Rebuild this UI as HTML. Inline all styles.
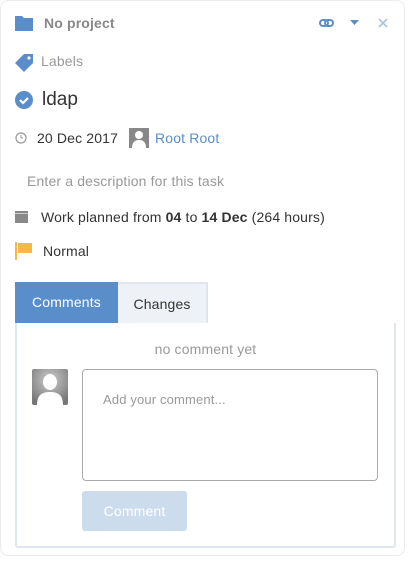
<!DOCTYPE html>
<html><head><style>
*{box-sizing:border-box;margin:0;padding:0}
body{width:409px;height:562px;background:#fff;font-family:"Liberation Sans",sans-serif;font-size:14px;color:#333;position:relative;overflow:hidden;letter-spacing:0.15px}
.card{position:absolute;left:0;top:0;width:405px;height:556px;border:1px solid #ececec;border-radius:8px;background:#fff}
.a{position:absolute;white-space:nowrap}
</style></head><body>
<div class="card"></div>
<svg class="a" style="left:15px;top:15px" width="18" height="16" viewBox="0 0 18 16"><path d="M0 1h7l2 2h9v13H0z" fill="#5a8ecb"/></svg>
<div class="a" style="left:44px;top:15px;font-weight:bold;color:#888;font-size:14px">No project</div>
<svg class="a" style="left:319px;top:18px" width="15" height="10" viewBox="0 0 15 10"><rect x="1" y="2" width="8" height="6" rx="3" fill="none" stroke="#5a8ecb" stroke-width="2"/><rect x="6" y="2" width="8" height="6" rx="3" fill="none" stroke="#5a8ecb" stroke-width="2"/></svg>
<svg class="a" style="left:350px;top:20px" width="9" height="6"><path d="M0 0h9L4.5 5z" fill="#5a8ecb"/></svg>
<svg class="a" style="left:378px;top:18px" width="10" height="10"><path d="M1 1l8 8M9 1l-8 8" stroke="#a9c2e4" stroke-width="1.6"/></svg>
<svg class="a" style="left:15px;top:53px" width="19" height="19" viewBox="0 0 19 19"><path d="M9 1h9v9l-9 9-9-9z" fill="#5a8ecb"/><circle cx="14" cy="5" r="1.6" fill="#fff"/></svg>
<div class="a" style="left:41px;top:53px;color:#999">Labels</div>
<svg class="a" style="left:15px;top:91px" width="18" height="18"><circle cx="9" cy="9" r="9" fill="#5a8ecb"/><path d="M5 9l3 3 5-5" stroke="#fff" stroke-width="2.2" fill="none"/></svg>
<div class="a" style="left:42px;top:89px;font-size:19px;color:#333;letter-spacing:0">ldap</div>
<svg class="a" style="left:15px;top:132px" width="12" height="12"><circle cx="6" cy="6" r="5" fill="none" stroke="#999" stroke-width="1.2"/><path d="M6 3v3h2" stroke="#999" fill="none"/></svg>
<div class="a" style="left:37px;top:130px">20 Dec 2017</div>
<svg class="a" style="left:129px;top:128px" width="20" height="20"><rect width="20" height="20" fill="#888"/><circle cx="10" cy="7" r="4" fill="#fff"/><path d="M3 20c0-6 3-8 7-8s7 2 7 8z" fill="#fff"/></svg>
<div class="a" style="left:155px;top:130px;color:#5a8ecb">Root Root</div>
<div class="a" style="left:27px;top:173px;color:#999">Enter a description for this task</div>
<svg class="a" style="left:15px;top:211px" width="13" height="12"><rect width="13" height="12" fill="#888"/><rect x="0" y="2" width="13" height="1" fill="#ccc"/></svg>
<div class="a" style="left:41px;top:209px">Work planned from <b>04</b> to <b>14 Dec</b> (264 hours)</div>
<svg class="a" style="left:15px;top:242px" width="18" height="18"><rect x="0" y="0" width="2" height="18" fill="#f7b84b"/><path d="M3 1h14v10H3z" fill="#f7b84b"/></svg>
<div class="a" style="left:43px;top:243px">Normal</div>
<div class="a" style="left:15px;top:282px;width:103px;height:41px;background:#5a8ecb;color:#fff;text-align:center;line-height:41px">Comments</div>
<div class="a" style="left:118px;top:282px;width:90px;height:41px;background:#eef2f6;border:2px solid #dfe6ee;border-bottom:none;border-left:none;text-align:center;line-height:41px">Changes</div>
<div class="a" style="left:15px;top:323px;width:381px;height:225px;border:2px solid #dfe6ee;border-top:none;border-radius:0 0 3px 3px"></div>
<div class="a" style="left:15px;top:341px;width:381px;text-align:center;color:#999">no comment yet</div>
<svg class="a" style="left:32px;top:369px" width="36" height="36"><defs><radialGradient id="g" cx="50%" cy="30%" r="70%"><stop offset="0" stop-color="#ccc"/><stop offset="1" stop-color="#777"/></radialGradient></defs><rect width="36" height="36" rx="2" fill="url(#g)"/><ellipse cx="18" cy="13" rx="7" ry="8" fill="#fff"/><path d="M5 36c0-10 5-13 13-13s13 3 13 13z" fill="#fff"/></svg>
<div class="a" style="left:82px;top:369px;width:296px;height:112px;border:1px solid #aaa;border-radius:4px"></div>
<div class="a" style="left:103px;top:392px;color:#999;font-size:13px">Add your comment...</div>
<div class="a" style="left:82px;top:491px;width:105px;height:40px;background:#cddcec;border-radius:3px;color:#fff;text-align:center;line-height:40px">Comment</div>
</body></html>
